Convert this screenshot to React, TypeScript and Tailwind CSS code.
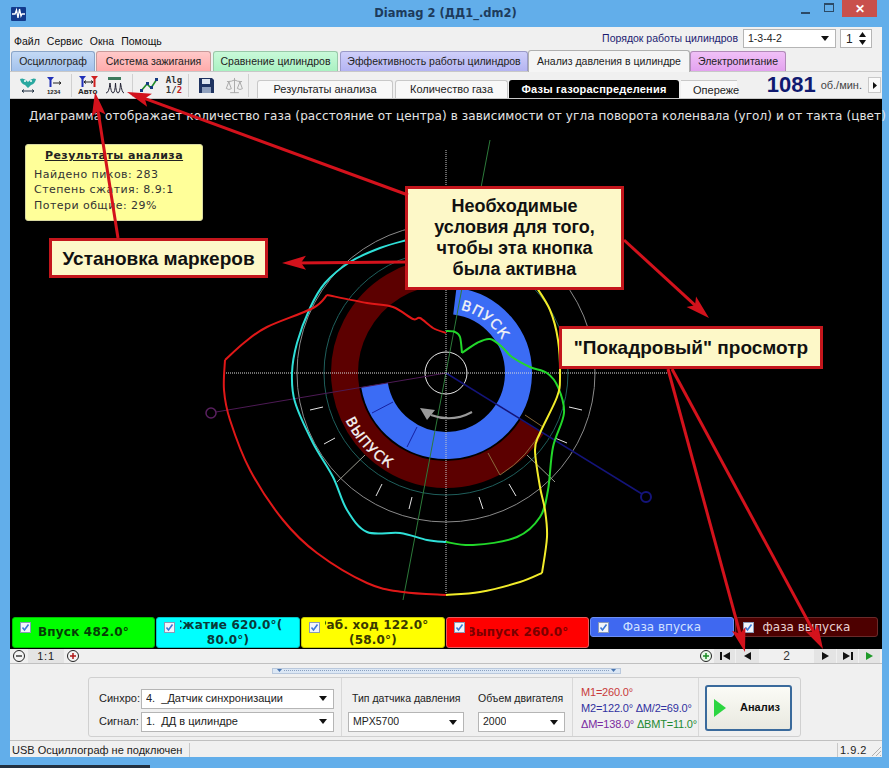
import React from 'react';
import { Scale } from 'lucide-react';

const CX = 446;
const CY = 373;

const polar = (deg: number, r: number) => {
  const a = (deg * Math.PI) / 180;
  return [CX + r * Math.sin(a), CY - r * Math.cos(a)];
};

// clockwise from the top of the dial, in degrees
const arc = (from: number, to: number, r: number) => {
  const [x1, y1] = polar(from, r);
  const [x2, y2] = polar(to, r);
  const large = Math.abs(to - from) > 180 ? 1 : 0;
  const sweep = to > from ? 1 : 0;
  return `M${x1} ${y1}A${r} ${r} 0 ${large} ${sweep} ${x2} ${y2}`;
};

// catmull-rom through the measured points
const smooth = (pts: number[][]) => {
  let d = `M${pts[0][0]} ${pts[0][1]}`;
  for (let i = 0; i < pts.length - 1; i++) {
    const p0 = pts[Math.max(i - 1, 0)];
    const p1 = pts[i];
    const p2 = pts[i + 1];
    const p3 = pts[Math.min(i + 2, pts.length - 1)];
    const c1x = p1[0] + (p2[0] - p0[0]) / 6;
    const c1y = p1[1] + (p2[1] - p0[1]) / 6;
    const c2x = p2[0] - (p3[0] - p1[0]) / 6;
    const c2y = p2[1] - (p3[1] - p1[1]) / 6;
    d += `C${c1x} ${c1y} ${c2x} ${c2y} ${p2[0]} ${p2[1]}`;
  }
  return d;
};

const tabs = [
  { label: 'Осциллограф', cls: 'w-[84px] bg-gradient-to-b from-[#c3d9f5] to-[#a3c2ec] border-[#8aa5c8] mr-px' },
  { label: 'Система зажигания', cls: 'w-[115px] bg-gradient-to-b from-[#ffc9c9] to-[#ffabab] border-[#c89a9a] mr-[2px]' },
  { label: 'Сравнение цилиндров', cls: 'w-[125px] bg-gradient-to-b from-[#c9f9d9] to-[#a9f2c2] border-[#98c8a8] mr-[2px]' },
  { label: 'Эффективность работы цилиндров', cls: 'w-[188px] bg-gradient-to-b from-[#cfcffa] to-[#b4b4f2] border-[#9a9ac8]' },
];

const legend = [
  { text: ['Впуск 482.0°'], cls: 'w-[143px] h-[31px] bg-[#00ff00] text-[#063d06] border-[#00c000] font-bold tracking-[0.2px]', cover: 'bg-[#00ff00]' },
  { text: ['Сжатие 620.0°(', '80.0°)'], cls: 'w-[144px] h-[31px] bg-[#00ffff] text-[#0a3a3a] border-[#00c8c8] font-bold tracking-[0.2px]', cover: 'bg-[#00ffff]' },
  { text: ['Раб. ход 122.0°', '(58.0°)'], cls: 'w-[144px] h-[31px] bg-[#ffff00] text-[#3a3a00] border-[#c8c800] font-bold tracking-[0.2px]', cover: 'bg-[#ffff00]' },
  { text: ['Выпуск 260.0°'], cls: 'w-[143px] h-[31px] bg-[#ff0000] text-[#7a0000] border-[#e85a5a] font-bold tracking-[0.2px]', cover: 'bg-[#ff0000]' },
  { text: ['Фаза впуска'], cls: 'w-[144px] h-[20px] bg-[#3f68f0] text-[#cfe0ff] border-[#6d8ff5]', cover: 'bg-[#3f68f0]' },
  { text: ['фаза выпуска'], cls: 'w-[143px] h-[20px] bg-[#4d0000] text-[#e8cfcf] border-[#6a2a2a]', cover: 'bg-[#4d0000]' },
];

// each trace is split where the reference has a hard corner
const curves = [
  {
    color: '#2fe0d8',
    pts: [[407, 240], [380, 248], [350, 262], [325, 283], [310, 308], [297, 343], [292, 373], [295, 402], [313, 443], [333, 477], [347, 510], [367, 532], [400, 533], [427, 540], [446, 542]],
  },
  {
    color: '#22d82a',
    pts: [[446, 542], [473, 545], [517, 537], [540, 517], [548, 490], [553, 447], [564, 413], [558, 387], [547, 373], [530, 367], [512, 357], [502, 347], [490, 339], [477, 343], [462, 353]],
  },
  {
    color: '#22d82a',
    pts: [[462, 353], [460, 337], [455, 332], [446, 331]],
  },
  {
    color: '#e01818',
    pts: [[446, 333], [433, 328], [420, 318], [413, 319], [393, 307], [367, 303], [327, 295]],
  },
  {
    color: '#e01818',
    pts: [[327, 295], [313, 308], [267, 327], [245, 342], [225, 360]],
  },
  {
    color: '#e01818',
    pts: [[225, 360], [224, 390], [230, 420], [250, 470], [283, 520], [317, 553], [367, 583], [403, 592], [446, 595]],
  },
  {
    color: '#f2ec2a',
    pts: [[446, 595], [480, 592], [520, 582], [542, 573]],
  },
  {
    color: '#f2ec2a',
    pts: [[542, 573], [547, 537], [545, 510], [540, 487], [535, 450], [540, 433], [557, 397], [560, 377], [558, 340], [550, 310], [535, 285]],
  },
];

const ticks = [
  [310, 410, 323, 407],
  [324, 444, 335, 438],
  [376, 496, 382, 484],
  [409, 509, 412, 497],
  [479, 497, 483, 509],
  [509, 484, 516, 496],
  [555, 438, 567, 443],
  [569, 407, 582, 410],
];

const Combo = ({ text, cls }: { text: string; cls: string }) => (
  <div className={`flex items-center justify-between bg-white border border-[#b5b5b5] pl-[4px] pr-[5px] ${cls}`}>
    <span className="truncate whitespace-pre">{text}</span>
    <svg width="9" height="5" viewBox="0 0 9 5" className="shrink-0">
      <polygon points="0,0 8,0 4,5" fill="#111" />
    </svg>
  </div>
);

const Arrow = ({ x1, y1, x2, y2 }: { x1: number; y1: number; x2: number; y2: number }) => {
  const ang = Math.atan2(y2 - y1, x2 - x1);
  const p = (along: number, side: number) => {
    const x = x2 - along * Math.cos(ang) - side * Math.sin(ang);
    const y = y2 - along * Math.sin(ang) + side * Math.cos(ang);
    return `${x},${y}`;
  };
  return (
    <g>
      <line x1={x1} y1={y1} x2={x2 - 12 * Math.cos(ang)} y2={y2 - 12 * Math.sin(ang)} stroke="#d3121c" strokeWidth="3" />
      <polygon points={`${p(0, 0)} ${p(24, 7)} ${p(19, 0)} ${p(24, -7)}`} fill="#d3121c" />
    </g>
  );
};

const Callout = ({ cls, children }: { cls: string; children: React.ReactNode }) => (
  <div className={`absolute flex items-center justify-center text-center bg-[#fdf8c8] border-[3px] border-[#c4161c] font-bold text-[#111] text-[18px] leading-[21px] ${cls}`}>
    {children}
  </div>
);

const ToolBtn = ({ children, cls = '' }: { children: React.ReactNode; cls?: string }) => (
  <div className={`flex items-center justify-center w-[26px] h-[22px] ${cls}`}>{children}</div>
);

const Chart = () => (
  <svg width="872" height="485" viewBox="10 132 872 485" className="block">
    <defs>
      <path id="vpuskPath" d={arc(13, 70, 65)} />
      <path id="vypuskPath" d={arc(245, 195, 111)} />
    </defs>
    <path d={arc(122, 356, 101.5)} fill="none" stroke="#5c0000" strokeWidth="27" />
    <path d={arc(7, 260.5, 72.5)} fill="none" stroke="#3b6cf5" strokeWidth="27" />
    <circle cx={CX} cy={CY} r="122" fill="none" stroke="#1f5f5c" strokeWidth="1" />
    <circle cx={CX} cy={CY} r="149" fill="none" stroke="#8a8a8a" strokeWidth="1" />
    <circle cx={CX} cy={CY} r="21" fill="none" stroke="#e8e8e8" strokeWidth="1" />
    <path
      d="M488 453L500 475A115 115 0 0 0 543 427L525 415"
      fill="none"
      stroke="#8a6a3c"
      strokeWidth="1"
    />
    <line x1="372" y1="413" x2="393" y2="402" stroke="#1520a0" strokeWidth="1" />
    <line x1="407" y1="447" x2="417" y2="427" stroke="#1520a0" strokeWidth="1" />
    <text fill="#f4f4f4" stroke="#f4f4f4" strokeWidth="0.3" fontFamily="'DejaVu Sans', sans-serif" fontSize="14" letterSpacing="1">
      <textPath href="#vpuskPath">ВПУСК</textPath>
    </text>
    <text fill="#f4f4f4" stroke="#f4f4f4" strokeWidth="0.3" fontFamily="'DejaVu Sans', sans-serif" fontSize="14" letterSpacing="1">
      <textPath href="#vypuskPath">ВЫПУСК</textPath>
    </text>
    <line x1="490" y1="140" x2="403" y2="600" stroke="#2c7a3a" strokeWidth="1" />
    <line x1={CX} y1={CY} x2="216" y2="412" stroke="#4d1a55" strokeWidth="1" />
    <circle cx="211" cy="413" r="5" fill="none" stroke="#5a2060" strokeWidth="1.5" />
    <line x1={CX} y1={CY} x2="642" y2="494" stroke="#14147a" strokeWidth="1.5" />
    <circle cx="646" cy="497" r="5" fill="none" stroke="#14147a" strokeWidth="2" />
    <line x1="224" y1={CY} x2="670" y2={CY} stroke="#dcdcdc" strokeWidth="1" strokeDasharray="1 1" />
    <line x1={CX} y1="150" x2={CX} y2="596" stroke="#c8c8c8" strokeWidth="1" strokeDasharray="1 1" />
    {ticks.map((t, i) => (
      <line key={i} x1={t[0]} y1={t[1]} x2={t[2]} y2={t[3]} stroke="#e4e4e4" strokeWidth="1" />
    ))}
    <line x1="337" y1="482" x2="365" y2="455" stroke="#9a9a90" strokeWidth="1" />
    <line x1="527" y1="455" x2="555" y2="482" stroke="#9a9a90" strokeWidth="1" />
    {curves.map((c, i) => (
      <path key={i} d={smooth(c.pts)} fill="none" stroke={c.color} strokeWidth="2" strokeLinejoin="round" />
    ))}
    <path d="M472 412Q452 423 431 415" fill="none" stroke="#9a9a9a" strokeWidth="2" />
    <polygon points="420,408 427,420 435,410" fill="#9a9a9a" />
  </svg>
);

export default function App() {
  return (
    <div className="relative w-[889px] h-[768px] overflow-hidden bg-[#62aeea] font-['Liberation_Sans',sans-serif] text-[11px] text-[#222]">
      <div className="relative flex items-center h-[27px] pl-[11px]">
        <svg width="15" height="14" viewBox="0 0 15 14">
          <rect width="15" height="14" rx="1" fill="#123a8c" />
          <path d="M1 7H4L5.5 3L7 11L8.5 2L10 9L11 7H14" fill="none" stroke="#fff" strokeWidth="1.3" />
        </svg>
        <div className="flex-1 pl-[64px] text-center text-[11.5px] font-bold text-[#1d3b5c] font-['DejaVu_Sans',sans-serif]">
          Diamag 2 (ДД1_.dm2)
        </div>
        <div className="flex items-start self-start mr-[12px]">
          <div className="w-[9px] h-[2px] mt-[12px] mr-[14px] bg-[#2c4a66]" />
          <div className="w-[10px] h-[9px] mt-[3px] mr-[8px] border border-[#2c4a66] border-t-2" />
          <div className="flex items-center justify-center w-[35px] h-[17px] bg-[#c9504c] text-white text-[12px] font-bold">✕</div>
        </div>
      </div>

      <div className="ml-[10px] w-[872px] bg-[#f0f0f0]">
        <div className="flex items-center h-[23px] pl-[4px] pr-[10px] text-[10.5px]">
          <div className="flex gap-[7px] pt-[6px] text-[#111]">
            <span>Файл</span>
            <span>Сервис</span>
            <span>Окна</span>
            <span>Помощь</span>
          </div>
          <span className="ml-auto mr-[5px] text-[#1c1c70]">Порядок работы цилиндров</span>
          <Combo text="1-3-4-2" cls="w-[93px] h-[19px]" />
          <div className="flex items-center justify-between w-[32px] h-[19px] ml-[4px] px-[5px] bg-white border border-[#b5b5b5] text-[12px]">
            <span>1</span>
            <svg width="7" height="13" viewBox="0 0 7 13">
              <polygon points="3.5,0 7,5 0,5" fill="#111" />
              <polygon points="0,8 7,8 3.5,13" fill="#111" />
            </svg>
          </div>
        </div>

        <div className="flex items-end h-[22px] pl-px border-b border-[#c8c8c8] text-[10.5px] whitespace-nowrap">
          {tabs.map(t => (
            <div key={t.label} className={`flex items-center justify-center h-[20px] border border-b-0 rounded-t-[3px] ${t.cls}`}>
              {t.label}
            </div>
          ))}
          <div className="flex items-center justify-center w-[162px] h-[22px] -mb-px bg-[#f5f5f5] border border-b-0 border-[#b0b0b0] rounded-t-[3px]">
            Анализ давления в цилиндре
          </div>
          <div className="flex items-center justify-center w-[96px] h-[20px] border border-b-0 border-[#b08ab8] rounded-t-[3px] bg-gradient-to-b from-[#f0c0f7] to-[#e3a2ef]">
            Электропитание
          </div>
        </div>

        <div className="flex items-center h-[26px] pl-[3px] pr-[1px]">
          <div className="flex items-center h-[23px] border-r border-[#d0d0d0] pr-[3px] gap-[1px] pl-[2px]">
            <ToolBtn>
              <svg width="20" height="18" viewBox="0 0 20 18">
                <path d="M2 3Q6 1 10 6Q14 1 18 3Q17 8 13 9L10 12L7 9Q3 8 2 3Z" fill="#2aa8a0" />
                <circle cx="7" cy="5" r="1" fill="#fff" />
                <circle cx="13" cy="5" r="1" fill="#fff" />
                <path d="M4 15H16M4 15L6 13.5M4 15L6 16.5M16 15L14 13.5M16 15L14 16.5" stroke="#234" strokeWidth="1" fill="none" />
              </svg>
            </ToolBtn>
            <ToolBtn>
              <svg width="18" height="18" viewBox="0 0 18 18">
                <path d="M1 1H8L5.5 4V11H3.5V4Z" fill="#2030b8" />
                <path d="M7 7H15M15 7L13 5.5M15 7L13 8.5" stroke="#222" fill="none" />
                <text x="1" y="17.5" fontSize="6" fontWeight="700" fill="#222" fontFamily="'Liberation Sans', sans-serif">1234</text>
              </svg>
            </ToolBtn>
          </div>
          <div className="flex items-center h-[23px] border-r border-[#d0d0d0] pl-[4px] pr-[4px] gap-0">
            <ToolBtn>
              <svg width="22" height="20" viewBox="0 0 22 20">
                <path d="M1 1H8L5.5 4V12H3.5V4Z" fill="#2030b8" />
                <path d="M13 1H20L17.5 4V12H15.5V4Z" fill="#d02020" />
                <path d="M6 7H15M6 7L8 5.5M6 7L8 8.5M15 7L13 5.5M15 7L13 8.5" stroke="#222" fill="none" />
                <text x="0" y="19" fontSize="8" fontWeight="700" fill="#222" fontFamily="'Liberation Sans', sans-serif">Авто</text>
              </svg>
            </ToolBtn>
            <ToolBtn>
              <svg width="20" height="18" viewBox="0 0 20 18">
                <rect x="3" y="1" width="13" height="3" fill="#3c7a5c" />
                <path d="M1 17Q4 17 5 7Q6 17 8 17Q10 17 10.5 7Q11 17 13 17Q15 17 15.5 7Q17 17 19 17" fill="none" stroke="#223" strokeWidth="1" />
              </svg>
            </ToolBtn>
          </div>
          <div className="flex items-center h-[23px] border-r border-[#d0d0d0] pl-[3px] pr-[2px] gap-0">
            <ToolBtn>
              <svg width="20" height="16" viewBox="0 0 20 16">
                <path d="M2 14L8 7L12 11L18 2" fill="none" stroke="#1f8a2a" strokeWidth="1.6" />
                <rect x="1" y="12" width="3" height="3" fill="#143a80" />
                <rect x="7" y="5" width="3" height="3" fill="#143a80" />
                <rect x="11" y="9" width="3" height="3" fill="#143a80" />
                <rect x="16" y="1" width="3" height="3" fill="#143a80" />
              </svg>
            </ToolBtn>
            <div className="flex flex-col items-center w-[24px] text-[9px] leading-[10px] font-bold font-['DejaVu_Sans_Mono',monospace] text-[#333]">
              <span>Alg</span>
              <span>
                1/<span className="text-[#c02020]">2</span>
              </span>
            </div>
          </div>
          <div className="flex items-center h-[23px] border-r border-[#d0d0d0] pl-[4px] pr-[1px] gap-[2px]">
            <ToolBtn cls="w-[22px]">
              <svg width="15" height="15" viewBox="0 0 15 15">
                <path d="M0 0H13L15 2V15H0Z" fill="#1f3360" />
                <rect x="3" y="1" width="8" height="5" fill="#dfe6ef" />
                <rect x="3" y="9" width="9" height="6" fill="#8fa0bd" />
              </svg>
            </ToolBtn>
            <ToolBtn>
              <Scale size={19} strokeWidth={1.2} color="#a8a8a8" />
            </ToolBtn>
          </div>
          <div className="flex items-end self-end h-[20px] ml-[8px] text-[11px] whitespace-nowrap">
            <div className="flex items-center justify-center w-[136px] h-[18px] mr-[2px] bg-[#f8f8f8] border border-b-0 border-[#c8c8c8] rounded-t-[3px]">
              Результаты анализа
            </div>
            <div className="flex items-center justify-center w-[113px] h-[18px] mr-px bg-[#f8f8f8] border border-b-0 border-[#c8c8c8] rounded-t-[3px]">
              Количество газа
            </div>
            <div className="flex items-center justify-center w-[170px] h-[18px] mr-[2px] bg-black text-white font-bold tracking-[0.2px] rounded-t-[3px]">
              Фазы газораспределения
            </div>
            <div className="w-[56px] h-[18px] pl-[12px] leading-[18px] bg-[#f8f8f8] border-t border-[#c8c8c8]">
              Опереже
            </div>
          </div>
          <div className="flex items-center ml-auto">
            <span className="text-[22px] font-bold leading-none text-[#101a70]">1081</span>
            <span className="ml-[5px] text-[#444] text-[11px]">об./мин.</span>
            <div className="flex items-center justify-center w-[13px] h-[16px] ml-[6px] bg-[#fafafa] border border-[#c8c8c8]">
              <svg width="4" height="7" viewBox="0 0 4 7">
                <polygon points="0,0 4,3.5 0,7" fill="#111" />
              </svg>
            </div>
          </div>
        </div>

        <div className="relative h-[551px] bg-black border-t border-[#c8c8c8]">
          <div className="h-[33px] pt-[9px] pl-[19px] text-[12px] leading-[16px] whitespace-nowrap text-[#e4e4e4] font-['DejaVu_Sans',sans-serif] tracking-[0.09px]">
            Диаграмма отображает количество газа (расстояние от центра) в зависимости от угла поворота коленвала (угол) и от такта (цвет)
          </div>
          <Chart />
          <div className="flex items-start gap-px pl-[2px] font-['DejaVu_Sans',sans-serif] text-[12px] leading-[15px]">
            {legend.map(l => (
              <div key={l.text[0]} className={`relative flex flex-col items-center justify-center border rounded-[3px] overflow-hidden ${l.cls}`}>
                {l.text.map(line => (
                  <span key={line} className="whitespace-nowrap">{line}</span>
                ))}
                <div className={`absolute left-0 top-[1px] flex items-start w-[23px] h-[17px] pl-[7px] pt-[3px] ${l.cover}`}>
                  <svg width="11" height="11" viewBox="0 0 11 11">
                    <rect x="0.5" y="0.5" width="10" height="10" fill="#f2f4fa" stroke="#8a9ab8" />
                    <path d="M2.5 5.5L4.5 8L8.5 2.5" fill="none" stroke="#3a78d8" strokeWidth="1.6" />
                  </svg>
                </div>
              </div>
            ))}
          </div>
          <div className="absolute left-[15px] top-[45px] w-[178px] h-[77px] pt-[3px] pl-[8px] bg-[#ffff99] border border-[#d8d8a0] rounded-[3px] font-['DejaVu_Sans',sans-serif] text-[11px] leading-[15.5px] tracking-[0.45px] text-[#333]">
            <div className="text-center font-bold underline pr-[8px] mb-[3px] text-[#222]">Результаты анализа</div>
            <div>Найдено пиков: 283</div>
            <div>Степень сжатия: 8.9:1</div>
            <div>Потери общие: 29%</div>
          </div>
        </div>

        <div className="flex items-center h-[15px] border-b border-[#c0c0c0] text-[11px]">
          <div className="flex items-center pl-[2px]">
            <svg width="14" height="14" viewBox="0 0 14 14">
              <circle cx="7" cy="7" r="5.5" fill="#f4f4f4" stroke="#222" />
              <path d="M4 7H10" stroke="#222" strokeWidth="1.3" />
            </svg>
            <div className="w-[36px] h-[14px] mx-[2px] bg-[#e4e4e4] text-center leading-[15px] tracking-[0.8px]">1:1</div>
            <svg width="14" height="14" viewBox="0 0 14 14">
              <circle cx="7" cy="7" r="5.5" fill="#f4f4f4" stroke="#222" />
              <path d="M4 7H10M7 4V10" stroke="#b01818" strokeWidth="1.5" />
            </svg>
          </div>
          <div className="flex items-center ml-auto pr-[2px]">
            <svg width="14" height="14" viewBox="0 0 14 14" className="mr-[1px]">
              <circle cx="7" cy="7" r="5.5" fill="#e8f8e8" stroke="#222" />
              <path d="M4 7H10M7 4V10" stroke="#168a20" strokeWidth="1.5" />
            </svg>
            <div className="flex items-center justify-center w-[21px] h-[14px] bg-[#e4e4e4] mr-px">
              <svg width="10" height="8" viewBox="0 0 10 8">
                <rect x="0" y="0" width="2" height="8" fill="#111" />
                <polygon points="10,0 10,8 3,4" fill="#111" />
              </svg>
            </div>
            <div className="flex items-center justify-center w-[23px] h-[14px] bg-[#e4e4e4]">
              <svg width="7" height="8" viewBox="0 0 7 8">
                <polygon points="7,0 7,8 0,4" fill="#111" />
              </svg>
            </div>
            <div className="w-[55px] text-center text-[12px] text-[#333]">2</div>
            <div className="flex items-center justify-center w-[22px] h-[14px] bg-[#e4e4e4] mr-px">
              <svg width="7" height="8" viewBox="0 0 7 8">
                <polygon points="0,0 0,8 7,4" fill="#111" />
              </svg>
            </div>
            <div className="flex items-center justify-center w-[21px] h-[14px] bg-[#e4e4e4] mr-px">
              <svg width="10" height="8" viewBox="0 0 10 8">
                <polygon points="0,0 0,8 7,4" fill="#111" />
                <rect x="8" y="0" width="2" height="8" fill="#111" />
              </svg>
            </div>
            <div className="flex items-center justify-center w-[21px] h-[14px] bg-[#e4e4e4]">
              <svg width="7" height="8" viewBox="0 0 7 8">
                <polygon points="0,0 0,8 7,4" fill="#1e9a28" />
              </svg>
            </div>
          </div>
        </div>

        <div className="flex items-center h-[13px] pl-[262px]">
          <div className="flex items-center justify-between w-[349px] h-[6px] px-[4px] bg-[#dbe7f5] border border-[#b9c8dc]">
            <svg width="5" height="3" viewBox="0 0 5 3">
              <polygon points="0,0 5,0 2.5,3" fill="#4a76b0" />
            </svg>
            <div className="flex-1 mx-[2px] border-t border-dotted border-[#8aa0c0]" />
            <svg width="5" height="3" viewBox="0 0 5 3">
              <polygon points="0,0 5,0 2.5,3" fill="#4a76b0" />
            </svg>
          </div>
        </div>

        <div className="flex items-stretch w-[713px] h-[60px] ml-[78px] border border-[#d0d0d0] rounded-[3px] text-[10.5px]">
          <div className="flex flex-col gap-[3px] justify-center w-[253px] pl-[10px] pt-[6px] border-r border-[#d8d8d8] text-[11px]">
            <div className="flex items-center">
              <span className="w-[42px]">Синхро:</span>
              <Combo text="4.  _Датчик синхронизации" cls="w-[193px] h-[20px]" />
            </div>
            <div className="flex items-center">
              <span className="w-[42px]">Сигнал:</span>
              <Combo text="1.  ДД в цилиндре" cls="w-[193px] h-[20px]" />
            </div>
          </div>
          <div className="flex flex-col justify-end w-[130px] pb-[4px] pl-[6px]">
            <span className="pl-[4px] mb-[5px]">Тип датчика давления</span>
            <Combo text="MPX5700" cls="w-[116px] h-[20px]" />
          </div>
          <div className="flex flex-col justify-end w-[101px] pb-[4px] pl-[6px] border-r border-[#d8d8d8]">
            <span className="mb-[5px]">Объем двигателя</span>
            <Combo text="2000" cls="w-[87px] h-[20px]" />
          </div>
          <div className="flex flex-col justify-center gap-[2px] w-[126px] pl-[8px] pt-[2px] border-r border-[#d8d8d8] text-[11px] leading-[14px] tracking-[-0.2px]">
            <span className="text-[#c83a3a]">M1=260.0°</span>
            <span className="text-[#3030a0]">M2=122.0° ΔM/2=69.0°</span>
            <span>
              <span className="text-[#7a2aa0]">ΔM=138.0°</span> <span className="text-[#1e8a30]">ΔBMT=11.0°</span>
            </span>
          </div>
          <div className="flex items-center pl-[6px] pt-[1px]">
            <div className="flex items-center w-[87px] h-[46px] pl-[7px] bg-gradient-to-b from-[#fbfbf6] to-[#e9e9e0] border-2 border-[#3a6a9c] rounded-[3px]">
              <svg width="12" height="18" viewBox="0 0 12 18">
                <polygon points="0,0 12,9 0,18" fill="#2cd640" />
              </svg>
              <span className="ml-[14px] text-[11px] font-bold text-[#111]">Анализ</span>
            </div>
          </div>
        </div>

        <div className="h-[20px] pt-[3px]">
          <div className="h-[17px] pt-[2px] border-t border-[#c0c0c0] text-[11px]">
            <div className="flex items-center h-[14px]">
              <div className="w-[180px] h-full pl-[2px] border-r border-[#c8c8c8] leading-[15px] whitespace-nowrap">USB Осциллограф не подключен</div>
              <div className="flex-1" />
              <div className="relative w-[45px] h-full pl-[2px] border-l border-[#c8c8c8] leading-[15px] tracking-[0.5px]">
                1.9.2
                <svg width="11" height="11" viewBox="0 0 11 11" className="absolute right-0 bottom-0">
                  <path d="M10 1L1 10M10 5L5 10M10 9L9 10" stroke="#b0b0b0" />
                </svg>
              </div>
            </div>
          </div>
        </div>
      </div>
      <div className="w-[150px] h-[3px] mt-[8px] bg-[#22303f]" />

      <Callout cls="left-[405px] top-[186px] w-[219px] h-[104px]">
        <span>
          Необходимые
          <br />
          условия для того,
          <br />
          чтобы эта кнопка
          <br />
          была активна
        </span>
      </Callout>
      <Callout cls="left-[49px] top-[238px] w-[219px] h-[40px] text-[19px]">Установка маркеров</Callout>
      <Callout cls="left-[559px] top-[326px] w-[264px] h-[43px] text-[19px]">"Покадровый" просмотр</Callout>

      <svg width="889" height="768" viewBox="0 0 889 768" className="absolute left-0 top-0 pointer-events-none">
        <Arrow x1={405} y1={262} x2={282} y2={263} />
        <Arrow x1={408} y1={195} x2={127} y2={92} />
        <Arrow x1={118} y1={238} x2={95} y2={92} />
        <Arrow x1={624} y1={240} x2={709} y2={318} />
        <Arrow x1={668} y1={369} x2={745} y2={652} />
        <Arrow x1={672} y1={369} x2={823} y2={649} />
      </svg>
    </div>
  );
}
